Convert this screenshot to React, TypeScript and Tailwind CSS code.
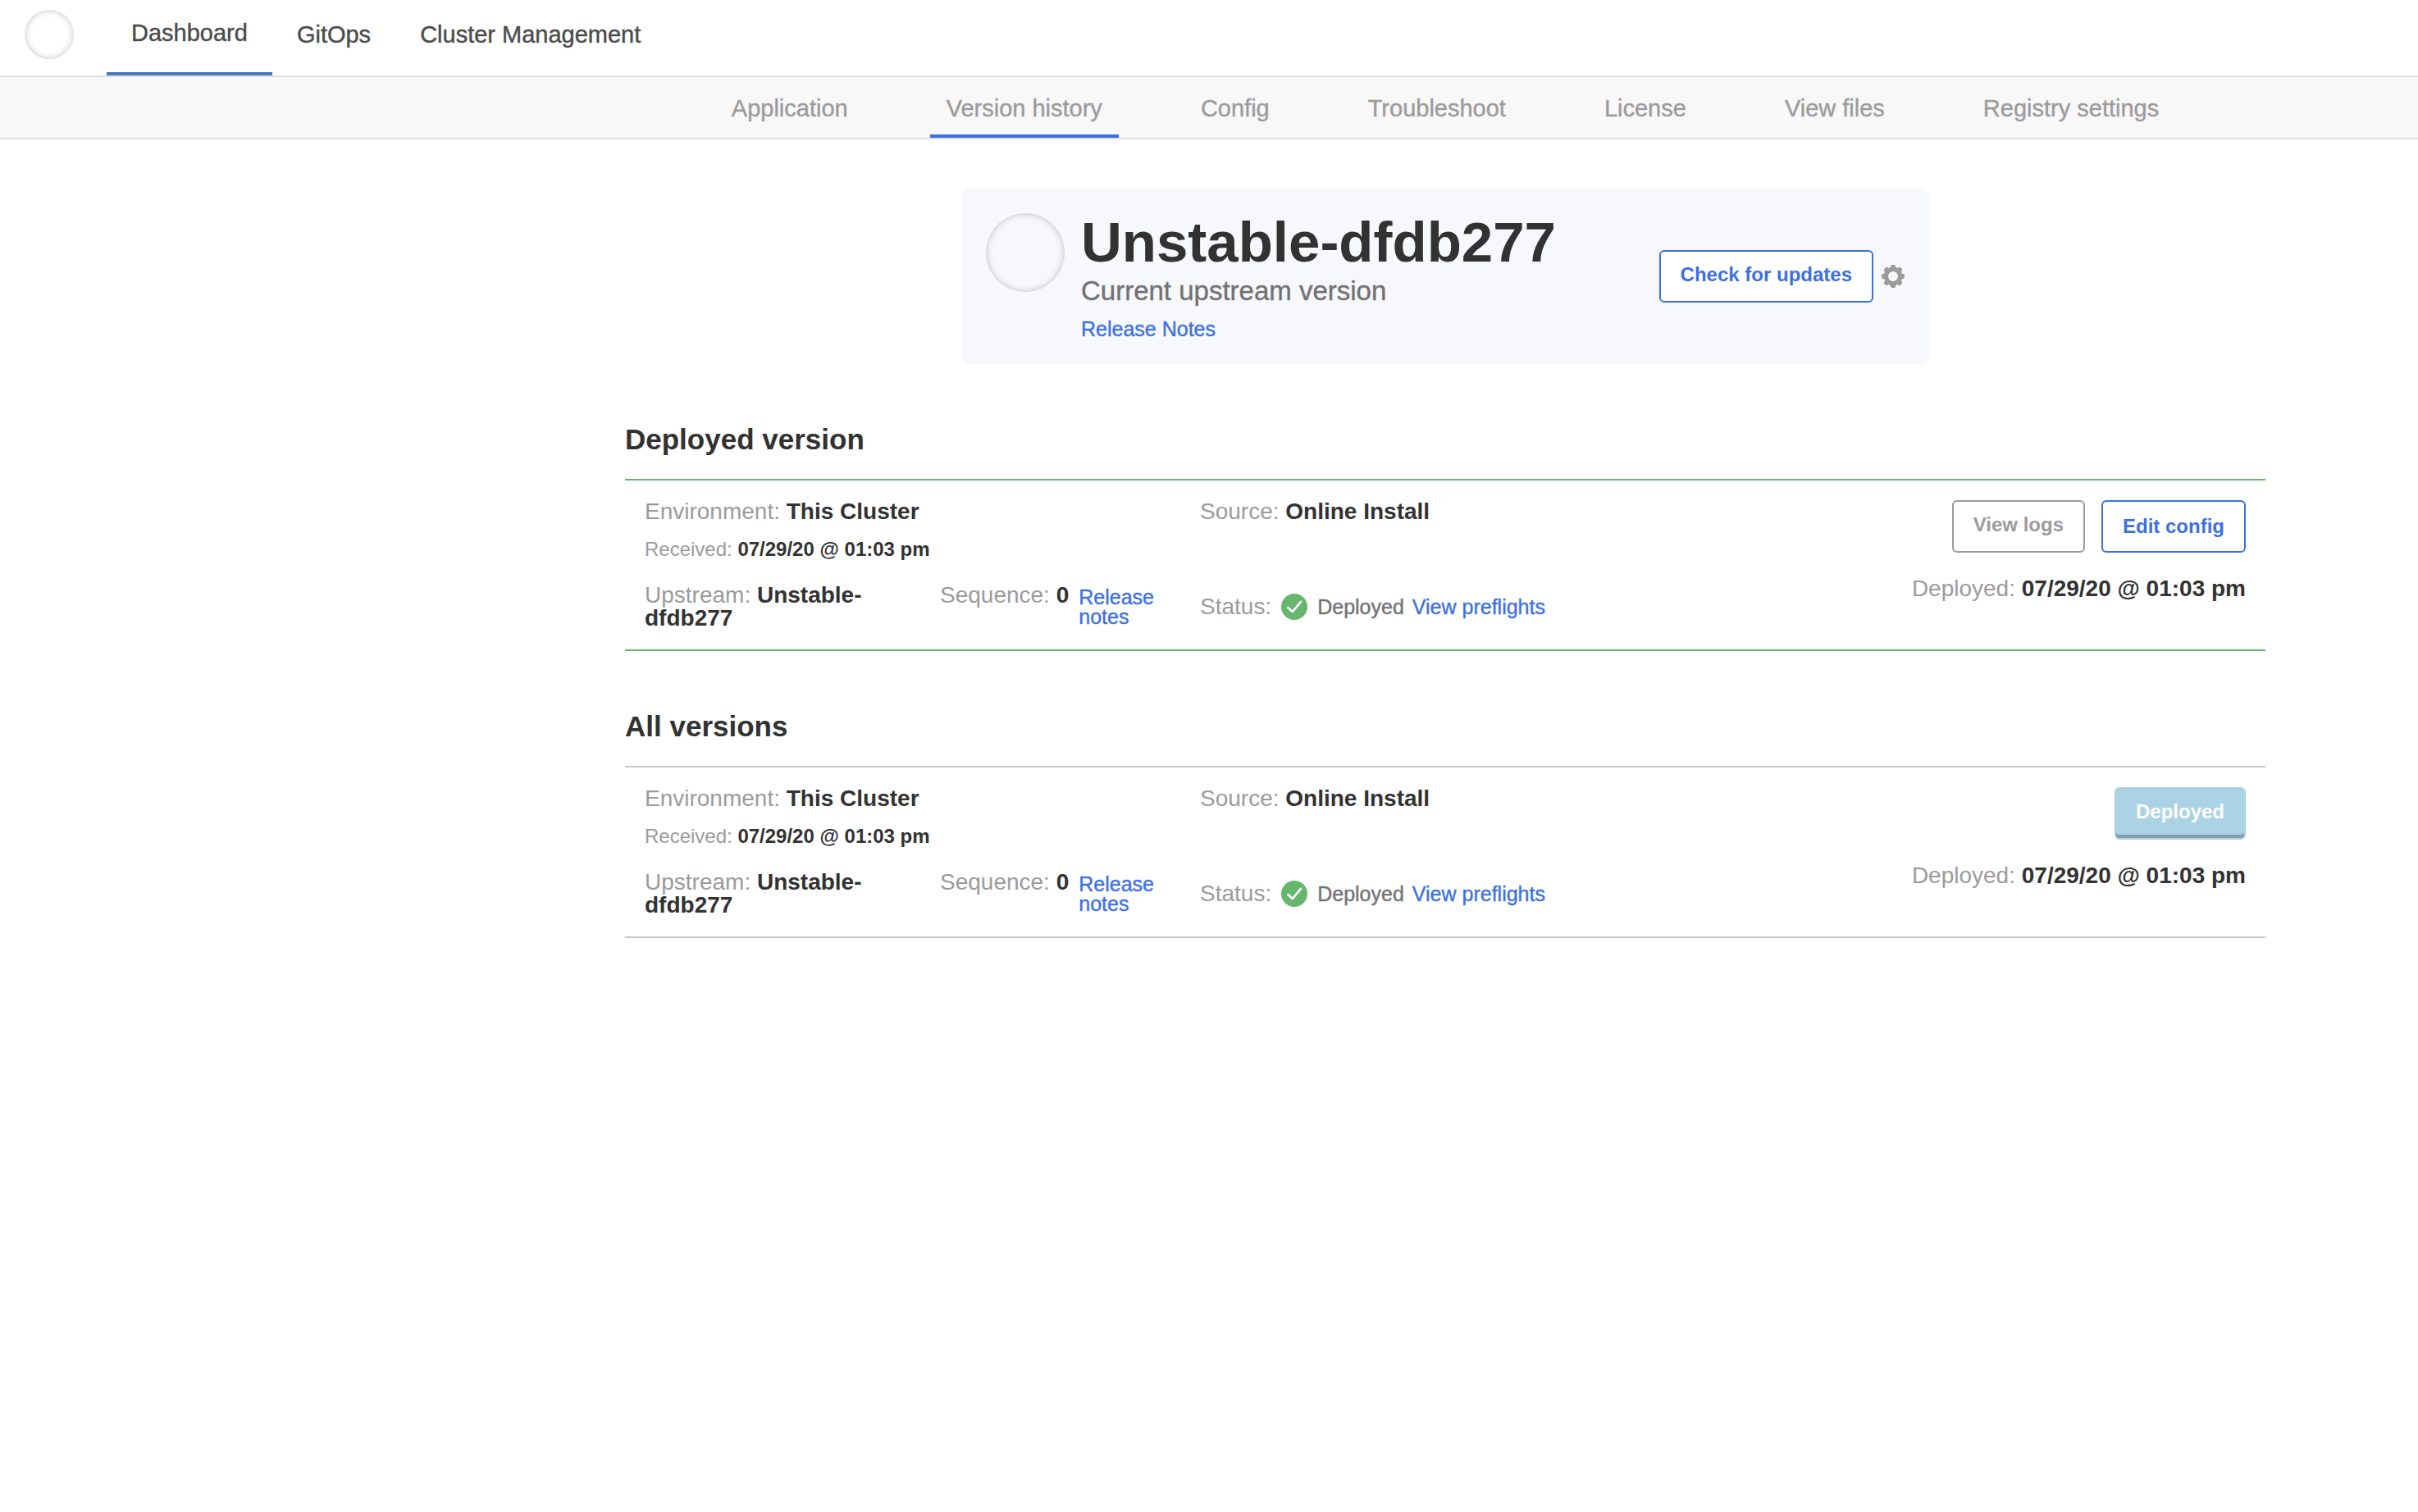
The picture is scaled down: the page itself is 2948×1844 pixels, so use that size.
import type { ReactNode } from "react";

// Thickens regular text to a medium weight in the text's own colour.
const medium =
  "[-webkit-text-stroke:1px_color-mix(in_srgb,currentColor_40%,transparent)]";

const mediumLink = `text-[25px] text-[#3c70e0] hover:underline ${medium}`;

const buttonBase =
  "h-16 rounded-md border-2 px-6 text-2xl leading-7 font-bold";

function CircleLogo({ size }: { size: string }) {
  return (
    <span
      className={`block shrink-0 rounded-full shadow-[inset_0_0_8px_rgba(0,0,0,0.24)] ${size}`}
    />
  );
}

function GearIcon() {
  return (
    <svg viewBox="0 0 28 28" className="block size-7" aria-hidden="true">
      <g fill="#9b9b9b">
        {[0, 45, 90, 135].map((angle) => (
          <rect
            key={angle}
            x="10.8"
            y="0"
            width="6.4"
            height="28"
            rx="2.6"
            transform={`rotate(${angle} 14 14)`}
          />
        ))}
        <circle cx="14" cy="14" r="11.2" />
      </g>
      <circle cx="14" cy="14" r="6" fill="#f7f8fc" />
    </svg>
  );
}

function CheckIcon() {
  return (
    <svg viewBox="0 0 32 32" className="block size-8 shrink-0" aria-hidden="true">
      <circle cx="16" cy="16" r="16" fill="#66b66d" />
      <path
        d="M8.2 17l5.6 5L24 9.8"
        fill="none"
        stroke="#fff"
        strokeWidth="2.6"
        strokeLinecap="round"
        strokeLinejoin="round"
      />
    </svg>
  );
}

function TopBar() {
  const tabs = ["Dashboard", "GitOps", "Cluster Management"];
  return (
    <header className="flex h-[94px] items-start border-b-2 border-[#dedede] bg-white pl-[30px]">
      <div className="mr-10 pt-3">
        <CircleLogo size="size-[60px]" />
      </div>
      <nav className="flex h-full">
        {tabs.map((tab, i) => (
          <a
            key={tab}
            href="#"
            className={`flex h-full items-center px-[30px] pb-2 text-[29px] leading-8 text-[#4a4a4a] ${medium} ${
              i === 0 ? "border-b-4 border-[#4678b8]" : ""
            }`}
          >
            {tab}
          </a>
        ))}
      </nav>
    </header>
  );
}

function SubNav() {
  const tabs = [
    "Application",
    "Version history",
    "Config",
    "Troubleshoot",
    "License",
    "View files",
    "Registry settings",
  ];
  return (
    <nav className="flex h-[76px] justify-center gap-20 border-b-2 border-[#dedede] bg-[#f8f8f8] pl-[576px]">
      {tabs.map((tab) => (
        <a
          key={tab}
          href="#"
          className={`flex items-center border-b-4 px-5 pt-[6px] text-[29px] leading-8 text-[#9b9b9b] ${medium} ${
            tab === "Version history" ? "border-[#3c70e0]" : "border-transparent"
          }`}
        >
          {tab}
        </a>
      ))}
    </nav>
  );
}

function UpstreamCard() {
  return (
    <section className="mx-auto flex w-full max-w-[1180px] items-center rounded-[10px] bg-[#f7f8fc] p-[30px]">
      <div className="flex flex-1 items-start gap-5">
        <CircleLogo size="size-24" />
        <div>
          <h1 className="text-[69px] leading-[72px] font-bold text-[#323232]">
            Unstable-dfdb277
          </h1>
          <p className={`mt-1 text-[33px] leading-[38px] text-[#717171] ${medium}`}>
            Current upstream version
          </p>
          <a href="#" className={`mt-[14px] block leading-[26px] ${mediumLink}`}>
            Release Notes
          </a>
        </div>
      </div>
      <div className="flex items-center gap-[10px]">
        <button
          type="button"
          className={`border-[#3c70e0] bg-white pb-1 text-[#3c70e0] ${buttonBase}`}
        >
          Check for updates
        </button>
        <button type="button" aria-label="Update settings">
          <GearIcon />
        </button>
      </div>
    </section>
  );
}

function Field({ label, children }: { label: string; children: ReactNode }) {
  return (
    <p className="text-[28px] leading-7 text-[#9b9b9b]">
      {label}: <span className="font-bold text-[#323232]">{children}</span>
    </p>
  );
}

function VersionRow({ border, actions }: { border: string; actions: ReactNode }) {
  return (
    <div className={`flex border-y-2 p-6 ${border}`}>
      <div className="w-[677px] shrink-0">
        <Field label="Environment">This Cluster</Field>
        <p className="mt-5 text-2xl leading-6 text-[#9b9b9b]">
          Received: <span className="font-bold text-[#323232]">07/29/20 @ 01:03 pm</span>
        </p>
        <div className="mt-[30px] flex">
          <div className="w-[360px] shrink-0 pr-5">
            <Field label="Upstream">Unstable-dfdb277</Field>
          </div>
          <div className="flex flex-1 items-start gap-3 pr-10">
            <div className="shrink-0">
              <Field label="Sequence">0</Field>
            </div>
            <a href="#" className={`mt-1 leading-6 ${mediumLink}`}>
              Release notes
            </a>
          </div>
        </div>
      </div>
      <div className="flex flex-1 flex-col justify-between pb-3">
        <Field label="Source">Online Install</Field>
        <div className="flex items-center gap-3 leading-7">
          <span className="text-[28px] text-[#9b9b9b]">Status:</span>
          <CheckIcon />
          <div className="flex gap-[10px] text-[25px]">
            <span className={`text-[#717171] ${medium}`}>Deployed</span>
            <a href="#" className={mediumLink}>
              View preflights
            </a>
          </div>
        </div>
      </div>
      <div className="flex flex-col items-end gap-[30px]">
        <div className="flex gap-5">{actions}</div>
        <Field label="Deployed">07/29/20 @ 01:03 pm</Field>
      </div>
    </div>
  );
}

function VersionSection({ title, children }: { title: string; children: ReactNode }) {
  return (
    <section className="mt-[72px]">
      <h2 className="mb-7 text-[35px] leading-10 font-bold text-[#323232]">{title}</h2>
      {children}
    </section>
  );
}

export default function App() {
  return (
    <div className="min-h-screen bg-white font-['Liberation_Sans',Arial,sans-serif]">
      <TopBar />
      <SubNav />
      <main className="pt-[60px] pl-[576px]">
        <div className="mx-auto max-w-[2000px]">
          <UpstreamCard />
          <VersionSection title="Deployed version">
            <VersionRow
              border="border-[#66b66d]"
              actions={
                <>
                  <button
                    type="button"
                    className={`border-[#9b9b9b] bg-white pb-1 text-[#9b9b9b] ${buttonBase}`}
                  >
                    View logs
                  </button>
                  <button
                    type="button"
                    className={`border-[#3c70e0] bg-white text-[#3c70e0] ${buttonBase}`}
                  >
                    Edit config
                  </button>
                </>
              }
            />
          </VersionSection>
          <VersionSection title="All versions">
            <VersionRow
              border="border-[#c4c8ca]"
              actions={
                <button
                  type="button"
                  disabled
                  className={`border-[#acd2e5] bg-[#acd2e5] pb-1 text-white shadow-[inset_0_-4px_0_#819eac] ${buttonBase}`}
                >
                  Deployed
                </button>
              }
            />
          </VersionSection>
        </div>
      </main>
    </div>
  );
}
